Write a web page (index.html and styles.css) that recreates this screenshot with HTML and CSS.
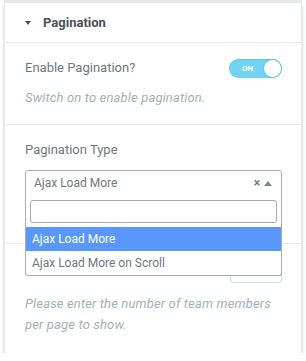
FILE: index.html
```html
<!DOCTYPE html>
<html lang="en">
<head>
  <meta charset="UTF-8">
  <title>Pagination</title>
  <link rel="stylesheet" href="styles.css">
</head>
<body>
  <div class="strip"></div>
  <div class="panel">
    <!-- Section header -->
    <div class="head">
      <span class="caret"></span>
      <span class="head-title">Pagination</span>
    </div>

    <!-- Enable pagination -->
    <div class="section">
      <div class="row">
        <label>Enable Pagination?</label>
        <div class="switch">
          <span class="switch-text">ON</span>
          <span class="knob"></span>
        </div>
      </div>
      <p class="desc">Switch on to enable pagination.</p>
    </div>

    <!-- Pagination type -->
    <div class="section type">
      <label>Pagination Type</label>
      <div class="select-wrap">
        <div class="select">
          <span class="select-value">Ajax Load More</span>
          <span class="clear">&times;</span>
          <span class="arrow"></span>
        </div>
        <div class="dropdown">
          <div class="search"><input type="text"></div>
          <ul class="options">
            <li class="active">Ajax Load More</li>
            <li>Ajax Load More on Scroll</li>
          </ul>
        </div>
      </div>
    </div>

    <!-- Per page -->
    <div class="section perpage">
      <div class="row end">
        <input class="number" type="text">
      </div>
      <p class="desc wide">Please enter the number of team members per page to show.</p>
    </div>
  </div>
</body>
</html>
```

FILE: styles.css
```css
* {
  margin: 0;
  padding: 0;
  box-sizing: border-box;
  font-family: Roboto, 'Liberation Sans', sans-serif;
}
body {
  background: #fff;
  width: 306px;
}
.strip {
  height: 3px;
  margin: 0 4px;
  background: #e6e9ec;
}
.panel {
  margin: 0 4px;
  background: #fff;
  border-left: 1px solid #e6e9ec;
  border-right: 1px solid #e6e9ec;
  box-shadow: 0 3px 3px rgba(0, 0, 0, 0.22);
}
.head {
  height: 40px;
  border-bottom: 1px solid #e6e9ec;
  display: flex;
  align-items: center;
  padding-left: 20px;
}
.caret {
  width: 0;
  height: 0;
  border-left: 3.5px solid transparent;
  border-right: 3.5px solid transparent;
  border-top: 4px solid #495157;
  margin-right: 12px;
  margin-top: 1px;
}
.head-title {
  font-size: 13px;
  font-weight: bold;
  color: #495157;
}
.section {
  padding: 15px 19px 17px 20px;
  border-bottom: 1px solid #e6e9ec;
}
.section:last-child {
  border-bottom: none;
}
.row {
  display: flex;
  align-items: center;
  justify-content: space-between;
  height: 20px;
}
.row.end {
  justify-content: flex-end;
  height: 26px;
}
label {
  display: block;
  font-size: 13px;
  line-height: 20px;
  color: #6d7882;
}
.switch {
  position: relative;
  width: 53px;
  height: 19px;
  border-radius: 10px;
  background: #6fd3f1;
  box-shadow: inset 0 1px 2px rgba(0, 0, 0, 0.08);
}
.switch-text {
  position: absolute;
  left: 13px;
  top: 5px;
  font-size: 8px;
  line-height: 9px;
  font-weight: bold;
  color: #fff;
}
.knob {
  position: absolute;
  right: 0;
  top: 0;
  width: 19px;
  height: 19px;
  border-radius: 50%;
  background: #fff;
  border: 1px solid #5fc3e2;
}
.desc {
  margin-top: 11px;
  font-size: 13px;
  line-height: 18px;
  font-style: italic;
  letter-spacing: 0.15px;
  color: #a4afb7;
}
.type {
  padding-bottom: 47px;
}
.select-wrap {
  position: relative;
  margin-top: 10px;
}
.select {
  height: 26px;
  border: 1px solid #a4afb7;
  border-radius: 3px 3px 0 0;
  display: flex;
  align-items: center;
  padding: 0 9px 0 8px;
}
.select-value {
  flex: 1;
  font-size: 12px;
  color: #6d7882;
}
.clear {
  font-size: 12px;
  font-weight: bold;
  color: #6d7882;
  margin-right: 4px;
}
.arrow {
  width: 0;
  height: 0;
  border-left: 4px solid transparent;
  border-right: 4px solid transparent;
  border-bottom: 5px solid #7a868f;
}
.dropdown {
  position: absolute;
  left: 0;
  right: 0;
  top: 25px;
  background: #fff;
  border: 1px solid #a4afb7;
  border-top: none;
  border-radius: 0 0 3px 3px;
  z-index: 10;
}
.search {
  padding: 5px 4px 4px;
}
.search input {
  width: 100%;
  height: 23px;
  border: 1px solid #aaa;
  border-radius: 3px;
  outline: none;
}
.options {
  list-style: none;
}
.options li {
  height: 24px;
  line-height: 24px;
  padding-left: 6px;
  font-size: 12px;
  color: #6d7882;
}
.options li.active {
  background: #5897fb;
  color: #fff;
}
.perpage {
  padding-top: 13px;
  padding-bottom: 18px;
}
.number {
  width: 52px;
  height: 26px;
  border: 1px solid #d5dadf;
  border-radius: 3px;
  outline: none;
}
.desc.wide {
  margin-top: 10px;
  line-height: 21px;
}
```
